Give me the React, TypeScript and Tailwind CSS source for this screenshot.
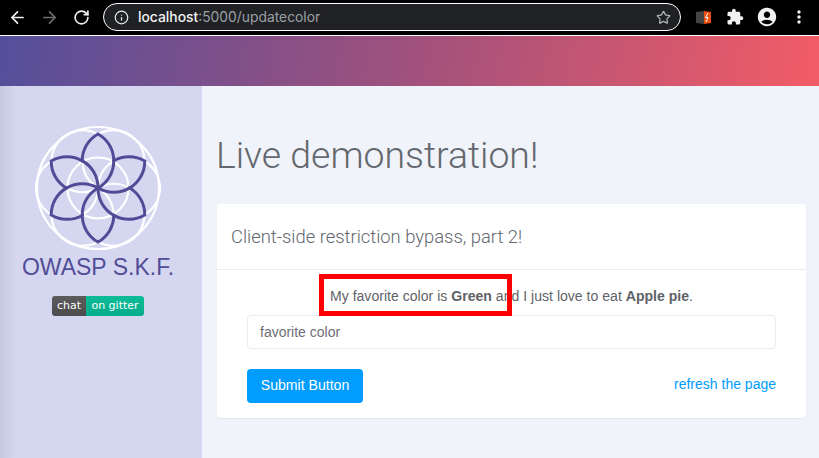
import { ArrowLeft, ArrowRight, RotateCw, Info, Star } from "lucide-react";
import { MdExtension, MdAccountCircle, MdMoreVert } from "react-icons/md";

function Logo() {
  const angles = [0, 60, 120, 180, 240, 300];
  return (
    <svg width="126" height="126" viewBox="-63 -63 126 126" className="block">
      <g fill="none" stroke="#ffffff" strokeWidth="2.2">
        <circle r="61" />
        <circle r="30.5" />
        {angles.map((a) => (
          <circle key={a} cx="15.5" cy="-26.8" r="31" transform={`rotate(${a})`} />
        ))}
      </g>
      <g fill="none" stroke="#514b97" strokeWidth="3" strokeLinecap="round">
        {angles.map((a) => (
          <path key={a} d="M-15.8,-27 A31,31 0 0 1 0,-54 A31,31 0 0 1 0,0" transform={`rotate(${a})`} />
        ))}
      </g>
    </svg>
  );
}

export default function App() {
  return (
    <div className="w-[819px] h-[458px] overflow-hidden flex flex-col bg-[#f0f3f9] font-['Liberation_Sans',sans-serif]">
      <div className="h-[36px] shrink-0 bg-black border-b border-white flex items-center pb-[1px]">
        <div className="w-[103px] shrink-0 flex items-center pl-[8px] gap-[13px]">
          <ArrowLeft size={19} color="#f1f1f1" strokeWidth={2.2} />
          <ArrowRight size={19} color="#6e6e6e" strokeWidth={2.2} />
          <RotateCw size={17} color="#f1f1f1" strokeWidth={2.4} className="ml-[1px]" />
        </div>
        <div className="w-[578px] h-[28px] shrink-0 rounded-full border border-white bg-[#202124] flex items-center pl-[10px] pr-[10px] font-['Inter',sans-serif] text-[13.85px]">
          <Info size={15} color="#e8eaed" strokeWidth={2} />
          <span className="ml-[9px] text-[#f1f3f4] font-medium">localhost</span>
          <span className="text-[#9aa0a6]">:5000/updatecolor</span>
          <Star size={15} color="#b0b3b6" strokeWidth={2} className="ml-auto mr-[-1px]" />
        </div>
        <div className="flex-1 flex items-center pl-[14px]">
          <svg width="17" height="15" viewBox="0 0 17 15" className="block">
            <path d="M1 2 L9 1 V14 L1 13 Z" fill="#444444" />
            <path d="M9 1 L16 2 V13 L9 14 Z" fill="#f0500f" />
            <path d="M13 3 L10.5 7.5 H13 L11 12" fill="none" stroke="#ffffff" strokeWidth="1" />
          </svg>
          <MdExtension size={18} color="#f1f1f1" className="ml-[14px]" />
          <MdAccountCircle size={22} color="#f1f1f1" className="ml-[12px]" />
          <MdMoreVert size={20} color="#f1f1f1" className="ml-[11px]" />
        </div>
      </div>
      <div className="h-[50px] shrink-0 bg-[linear-gradient(100deg,#544f9b,#a0517d_50%,#f25c66)]" />
      <div className="flex-1 flex min-h-0">
        <aside className="w-[202px] shrink-0 bg-[linear-gradient(to_right,#c6c7e1,#d5d6f0_16px)] pr-[6px] pt-[39px] flex flex-col items-center">
          <Logo />
          <div className="mt-[1px] text-[23px] leading-[30px] text-[#514d97] whitespace-nowrap">OWASP S.K.F.</div>
          <div className="mt-[14px] h-[20px] w-[92px] flex rounded-[3px] overflow-hidden font-['DejaVu_Sans',sans-serif] text-[11px] leading-[20px] text-white">
            <span className="w-[34px] bg-[linear-gradient(#5c5c5c,#4c4c4c)] text-center">chat</span>
            <span className="flex-1 bg-[linear-gradient(#0dbb98,#07ad8a)] text-center">on gitter</span>
          </div>
        </aside>
        <main className="flex-1 min-w-0 pl-[14px] pr-[13px] pt-[43px]">
          <h1 className="font-['Roboto',sans-serif] font-light text-[37.4px] leading-[52px] text-[#63676e] whitespace-nowrap">Live demonstration!</h1>
          <section className="relative mt-[23px] ml-[1px] h-[214px] bg-white rounded-[4px] shadow-[0_1px_2px_rgba(0,0,0,0.06)]">
            <div className="h-[66px] border-b border-[#e9ecef] pl-[14px] pt-[20px] font-['Roboto',sans-serif] font-light text-[18.4px] leading-[26px] text-[#63676e]">Client-side restriction bypass, part 2!</div>
            <div className="px-[30px]">
              <p className="mt-[16px] text-center text-[14.08px] leading-[20px] text-[#5f6368]">
                My favorite color is <b>Green</b> and I just love to eat <b>Apple pie</b>.
              </p>
              <input
                readOnly
                placeholder="favorite color"
                className="mt-[9px] block w-full h-[34px] border border-[#e9ecef] rounded-[4px] px-[12px] text-[14px] placeholder:text-[#6c6f75] outline-none"
              />
              <div className="mt-[20px] flex items-start justify-between">
                <button className="h-[34px] w-[116px] rounded-[4px] bg-[#009dff] text-white text-[14.1px]">Submit Button</button>
                <a className="text-[14px] leading-[30px] text-[#009dff]">refresh the page</a>
              </div>
            </div>
            <div className="absolute left-[102px] top-[70px] w-[193px] h-[42px] border-[5px] border-[#ff0000]" />
          </section>
        </main>
      </div>
    </div>
  );
}
